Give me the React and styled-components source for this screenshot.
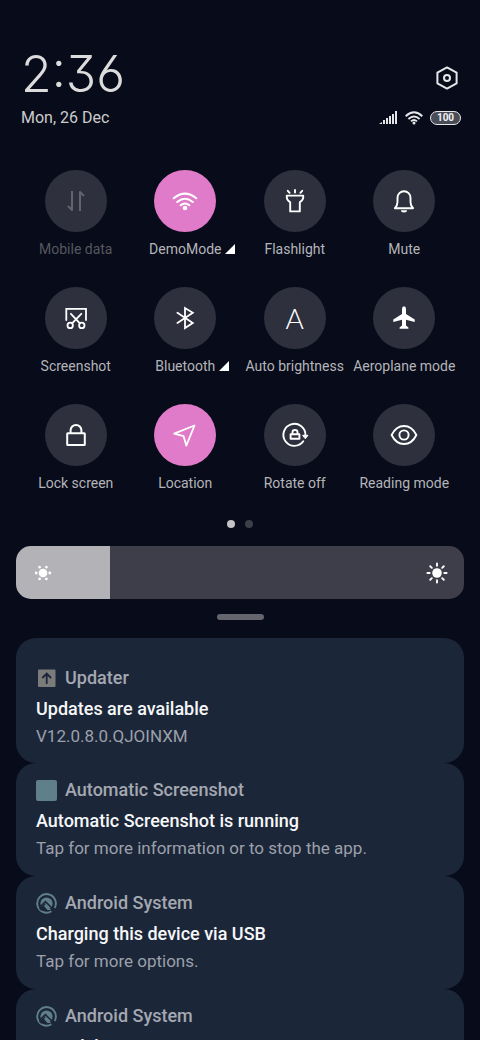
import React, { useState } from "react";
import styled, { createGlobalStyle } from "styled-components";

const GlobalStyle = createGlobalStyle`
  * { box-sizing: border-box; }
  body {
    margin: 0;
    background: #080b19;
    font-family: Roboto, "Liberation Sans", sans-serif;
  }
  h2, p { margin: 0; }
  button { font: inherit; }
`;

const Shade = styled.main`
  display: flex;
  flex-direction: column;
  height: 100vh;
  overflow: hidden;
  background: #080b19;
`;

const Header = styled.header`
  flex: none;
  padding: 48px 19px 0 21px;
`;

const HeaderRow = styled.div`
  display: flex;
  justify-content: space-between;
  align-items: ${(p) => p.$align || "center"};
  margin-top: ${(p) => p.$top || 0}px;
`;

const Clock = styled.time`
  font-family: Inter, Lato, sans-serif;
  font-weight: 300;
  font-size: 50px;
  line-height: 52px;
  font-feature-settings: "cv03", "cv09";
  color: #dcdcdc;
`;

const DateText = styled.time`
  font-size: 16px;
  line-height: 20px;
  color: #cbcbce;
`;

const IconButton = styled.button`
  display: flex;
  padding: 0 2px 10px 0;
  border: 0;
  background: none;
  color: #e6e6e8;
`;

const Status = styled.div`
  display: flex;
  align-items: center;
  gap: 7px;
  color: #e6e6e8;
`;

const Battery = styled.span`
  width: 31px;
  height: 14px;
  border: 1px solid #e6e6e8;
  border-radius: 7px;
  background: #4a4c58;
  color: #f2f2f2;
  font-size: 10px;
  line-height: 12px;
  font-weight: 700;
  text-align: center;
`;

const Tiles = styled.section`
  flex: none;
  display: grid;
  grid-template-columns: repeat(4, 1fr);
  row-gap: 29px;
  margin-top: 42px;
  padding: 0 21px;
`;

const Tile = styled.button`
  display: flex;
  flex-direction: column;
  align-items: center;
  gap: 8px;
  min-width: 0;
  padding: 0;
  border: 0;
  background: none;
  color: ${(p) => (p.$dim ? "#55575f" : "#b4b5b9")};
`;

const TileDisc = styled.span`
  display: flex;
  align-items: center;
  justify-content: center;
  width: 62px;
  height: 62px;
  border-radius: 50%;
  background: ${(p) => (p.$on ? "#df7bc9" : "#2e303d")};
  color: ${(p) => (p.$dim ? "#62646e" : "#ffffff")};
`;

const TileLabel = styled.span`
  display: flex;
  align-items: center;
  font-size: 14px;
  line-height: 18px;
  white-space: nowrap;
`;

const Corner = styled.svg`
  margin: 0 -14px 0 4px;
  color: #ffffff;
`;

const AutoLetter = styled.span`
  font-family: Lato, sans-serif;
  font-weight: 300;
  font-size: 28px;
  line-height: 32px;
`;

const Dots = styled.div`
  flex: none;
  display: flex;
  justify-content: center;
  gap: 10px;
  margin-top: 28px;
`;

const Dot = styled.span`
  width: 8px;
  height: 8px;
  border-radius: 50%;
  background: ${(p) => (p.$on ? "#c4c4c8" : "#3c3e49")};
`;

const SliderBox = styled.label`
  flex: none;
  display: grid;
  grid-template-columns: auto 1fr auto;
  align-items: center;
  margin: 18px 16px 0;
  color: #ffffff;
  & > * { grid-row: 1; }
`;

const Slider = styled.input`
  grid-column: 1 / -1;
  appearance: none;
  width: 100%;
  height: 53px;
  margin: 0;
  border-radius: 15px;
  background: linear-gradient(
    to right,
    #b3b2b7 var(--level),
    #3d3e49 var(--level)
  );
  &::-webkit-slider-thumb {
    appearance: none;
    width: 1px;
    height: 53px;
    background: transparent;
  }
`;

const SliderIcon = styled.svg`
  grid-column: ${(p) => p.$column};
  margin: 0 ${(p) => (p.$column === 3 ? 15 : 0)}px 0 ${(p) => (p.$column === 1 ? 15 : 0)}px;
  z-index: 1;
  pointer-events: none;
`;

const Handle = styled.div`
  flex: none;
  width: 47px;
  height: 6px;
  margin: 15px auto 18px;
  border-radius: 3px;
  background: #65656f;
`;

const Notifications = styled.section`
  flex: 1;
  min-height: 0;
  overflow: hidden;
  padding: 0 16px;
`;

const Card = styled.article`
  padding: ${(p) => (p.$first ? 29 : 16)}px 20px;
  padding-bottom: ${(p) => (p.$first ? 15 : 16)}px;
  border-radius: 20px;
  background: #1c2639;
`;

const CardHead = styled.div`
  display: flex;
  align-items: center;
  gap: 8px;
  height: 22px;
  color: #a4a8b0;
  font-size: 18px;
  line-height: 22px;
  font-weight: 500;
`;

const CardTitle = styled.h2`
  margin-top: 8px;
  color: #f6f7f8;
  font-size: 18px;
  line-height: 24px;
  font-weight: 500;
`;

const CardText = styled.p`
  margin-top: 3px;
  color: #9ba0aa;
  font-size: 17px;
  line-height: 24px;
`;

const Line = ({ children, width = 2 }) => (
  <svg
    width="32"
    height="32"
    viewBox="0 0 32 32"
    fill="none"
    stroke="currentColor"
    strokeWidth={width}
    strokeLinecap="round"
    strokeLinejoin="round"
    aria-hidden="true"
  >
    {children}
  </svg>
);

const icons = {
  data: (
    <Line>
      <path d="M12 6V25L8 21" strokeLinecap="butt" />
      <path d="M20 26V7L24 11" strokeLinecap="butt" />
    </Line>
  ),
  wifi: (
    <Line>
      <path d="M4.7 13.3Q16 4 27.3 13.3M8.2 17Q16 10.6 23.8 17M11.6 20.3Q16 16.6 20.4 20.3" />
      <circle cx="16" cy="23" r="1.3" fill="currentColor" />
    </Line>
  ),
  torch: (
    <Line width={1.9}>
      <path d="M16 5V7.6M8.8 5.8L10.6 7.8M23.2 5.8L21.4 7.8" />
      <path d="M7.8 10.6H24.2V12.4Q24.2 14.8 20.8 17.2V26.4H11.2V17.2Q7.8 14.8 7.8 12.4Z" />
    </Line>
  ),
  bell: (
    <Line width={1.9}>
      <path d="M6.9 23.2C9.1 21 9.5 19 9.5 17V12.7A6.5 6.5 0 0 1 22.5 12.7V17C22.5 19 22.9 21 25.1 23.2Z" />
      <path d="M13 25.2H19A3 2.2 0 0 1 13 25.2Z" fill="currentColor" stroke="none" />
    </Line>
  ),
  snip: (
    <Line width={1.8}>
      <path d="M6.3 18V6.9H26V18" strokeLinejoin="miter" />
      <path d="M10.9 11.8L19.7 21.2M21.3 11.8L12.3 21.2" />
      <circle cx="10.2" cy="23.4" r="2.7" />
      <circle cx="21.8" cy="23.4" r="2.7" />
    </Line>
  ),
  bluetooth: (
    <Line width={1.8}>
      <path d="M8.4 10.8L23.8 20.9L16 26V6L23.8 10.8L8.4 20.9" strokeLinejoin="miter" />
    </Line>
  ),
  auto: <AutoLetter aria-hidden="true">A</AutoLetter>,
  plane: (
    <Line>
      <path
        fill="currentColor"
        stroke="none"
        d="M16 4.3Q18 4.6 18 7V12L26.7 17.6V19.9L18 17.8V23.6L20.4 25.4V26.8H11.6V25.4L14 23.6V17.8L5.3 19.9V17.6L14 12V7Q14 4.6 16 4.3Z"
      />
    </Line>
  ),
  lock: (
    <Line>
      <rect x="7.2" y="14.2" width="17.6" height="11.8" rx="0.5" />
      <path d="M10.6 14V11.3A5.4 5.4 0 0 1 21.4 11.3V14" />
    </Line>
  ),
  location: (
    <Line width={1.8}>
      <path d="M25.5 6.5L5.2 14.7L14.6 17.2L17.3 26.6Z" />
    </Line>
  ),
  rotate: (
    <Line width={1.9}>
      <path d="M24.3 22.3A11 11 0 1 1 26.4 16" />
      <path d="M24 16.3H29L26.5 19.4Z" fill="currentColor" strokeWidth="1" />
      <rect x="11.6" y="15.2" width="8.8" height="4.6" />
      <path d="M13.5 15V13.3A2.5 2.3 0 0 1 18.5 13.3V15" />
    </Line>
  ),
  eye: (
    <Line width={1.9}>
      <path d="M3.6 16C6.6 10 11 7 16 7S25.4 10 28.4 16C25.4 22 21 25 16 25S6.6 22 3.6 16Z" />
      <circle cx="16" cy="16" r="4.6" />
    </Line>
  ),
};

const tiles = [
  { icon: "data", label: "Mobile data", dim: true },
  { icon: "wifi", label: "DemoMode", on: true, more: true },
  { icon: "torch", label: "Flashlight" },
  { icon: "bell", label: "Mute" },
  { icon: "snip", label: "Screenshot" },
  { icon: "bluetooth", label: "Bluetooth", more: true },
  { icon: "auto", label: "Auto brightness" },
  { icon: "plane", label: "Aeroplane mode" },
  { icon: "lock", label: "Lock screen" },
  { icon: "location", label: "Location", on: true },
  { icon: "rotate", label: "Rotate off" },
  { icon: "eye", label: "Reading mode" },
];

const UpdaterIcon = () => (
  <svg width="21" height="21" viewBox="0 0 21 21" aria-hidden="true">
    <rect x="2" y="1.5" width="17.5" height="17.5" rx="1" fill="#7b7b7b" />
    <path d="M10.7 16V6M6.3 10L10.7 5.6L15.1 10" fill="none" stroke="#1c2639" strokeWidth="1.8" />
  </svg>
);

const SquareIcon = () => (
  <svg width="21" height="21" viewBox="0 0 21 21" aria-hidden="true">
    <rect width="21" height="21" rx="2" fill="#5f7f8a" />
  </svg>
);

const SystemIcon = () => (
  <svg width="21" height="21" viewBox="0 0 21 21" fill="none" aria-hidden="true">
    <path d="M15.4 18.3A9.3 9.3 0 1 1 18.6 15" stroke="#5f7f8d" strokeWidth="1.9" />
    <circle cx="10.5" cy="10.5" r="6.1" fill="#5f7f8d" />
    <path d="M3.6 14.2L9.4 8.6L19 18" stroke="#1c2639" strokeWidth="1.5" />
    <path d="M3 15.4L9.2 10.2L12 17.4H5Z" fill="#1c2639" />
    <path d="M9.4 11.2L15.2 16.9H11.4L8 13Z" fill="#5f7f8d" />
  </svg>
);

const notifications = [
  { Icon: UpdaterIcon, app: "Updater", title: "Updates are available", text: "V12.0.8.0.QJOINXM" },
  {
    Icon: SquareIcon,
    app: "Automatic Screenshot",
    title: "Automatic Screenshot is running",
    text: "Tap for more information or to stop the app.",
  },
  { Icon: SystemIcon, app: "Android System", title: "Charging this device via USB", text: "Tap for more options." },
  { Icon: SystemIcon, app: "Android System", title: "USB debugging is on", text: "Tap to turn off USB debugging" },
];

export default function App() {
  const [level, setLevel] = useState(21);
  return (
    <Shade>
      <GlobalStyle />
      <Header>
        <HeaderRow $align="flex-end">
          <Clock>2:36</Clock>
          <IconButton aria-label="Settings">
            <svg width="24" height="24" viewBox="0 0 24 24" fill="none" stroke="currentColor" strokeWidth="2" strokeLinejoin="round">
              <path d="M12 1.4L21.6 6.6V17.4L12 22.6L2.4 17.4V6.6Z" />
              <circle cx="12" cy="12" r="3" />
            </svg>
          </IconButton>
        </HeaderRow>
        <HeaderRow $top={8}>
          <DateText>Mon, 26 Dec</DateText>
          <Status>
            <svg width="19" height="14" viewBox="0 0 19 14" fill="currentColor" aria-hidden="true">
              <path d="M0 13L3 11V13Z" />
              <rect x="4" y="9" width="2" height="4" />
              <rect x="7" y="7" width="2" height="6" />
              <rect x="10" y="5" width="2" height="8" />
              <rect x="13" y="3" width="2" height="10" />
              <rect x="16" y="0" width="2" height="13" />
            </svg>
            <svg width="18" height="14" viewBox="0 0 18 14" fill="none" stroke="currentColor" strokeWidth="1.9" aria-hidden="true">
              <path d="M0.7 5.2Q9 -2.6 17.3 5.2M3.4 8Q9 2.8 14.6 8M6 10.4Q9 7.8 12 10.4" />
              <circle cx="9" cy="12" r="1.5" fill="currentColor" stroke="none" />
            </svg>
            <Battery>100</Battery>
          </Status>
        </HeaderRow>
      </Header>

      <Tiles>
        {tiles.map((t) => (
          <Tile key={t.label} $dim={t.dim}>
            <TileDisc $on={t.on} $dim={t.dim}>{icons[t.icon]}</TileDisc>
            <TileLabel>
              {t.label}
              {t.more && (
                <Corner width="10" height="10" viewBox="0 0 10 10" aria-hidden="true">
                  <path d="M10 0V10H0Z" fill="currentColor" />
                </Corner>
              )}
            </TileLabel>
          </Tile>
        ))}
      </Tiles>

      <Dots>
        <Dot $on />
        <Dot />
      </Dots>

      <SliderBox>
        <SliderIcon $column={1} width="24" height="24" viewBox="-12 -12 24 24" fill="currentColor" aria-hidden="true">
          <circle r="4.3" />
          {[0, 60, 120, 180, 240, 300].map((a) => (
            <circle key={a} cx="6.8" r="1.4" transform={`rotate(${a})`} />
          ))}
        </SliderIcon>
        <Slider
          type="range"
          min="0"
          max="100"
          value={level}
          aria-label="Brightness"
          onChange={(e) => setLevel(Number(e.target.value))}
          style={{ "--level": `${level}%` }}
        />
        <SliderIcon $column={3} width="24" height="24" viewBox="-12 -12 24 24" fill="currentColor" aria-hidden="true">
          <circle r="4.8" />
          {[0, 45, 90, 135, 180, 225, 270, 315].map((a) => (
            <path key={a} d="M7.3 0H9.6" stroke="currentColor" strokeWidth="1.9" strokeLinecap="round" transform={`rotate(${a})`} />
          ))}
        </SliderIcon>
      </SliderBox>

      <Handle />

      <Notifications>
        {notifications.map(({ Icon, app, title, text }, i) => (
          <Card key={title} $first={i === 0}>
            <CardHead>
              <Icon />
              {app}
            </CardHead>
            <CardTitle>{title}</CardTitle>
            <CardText>{text}</CardText>
          </Card>
        ))}
      </Notifications>
    </Shade>
  );
}
